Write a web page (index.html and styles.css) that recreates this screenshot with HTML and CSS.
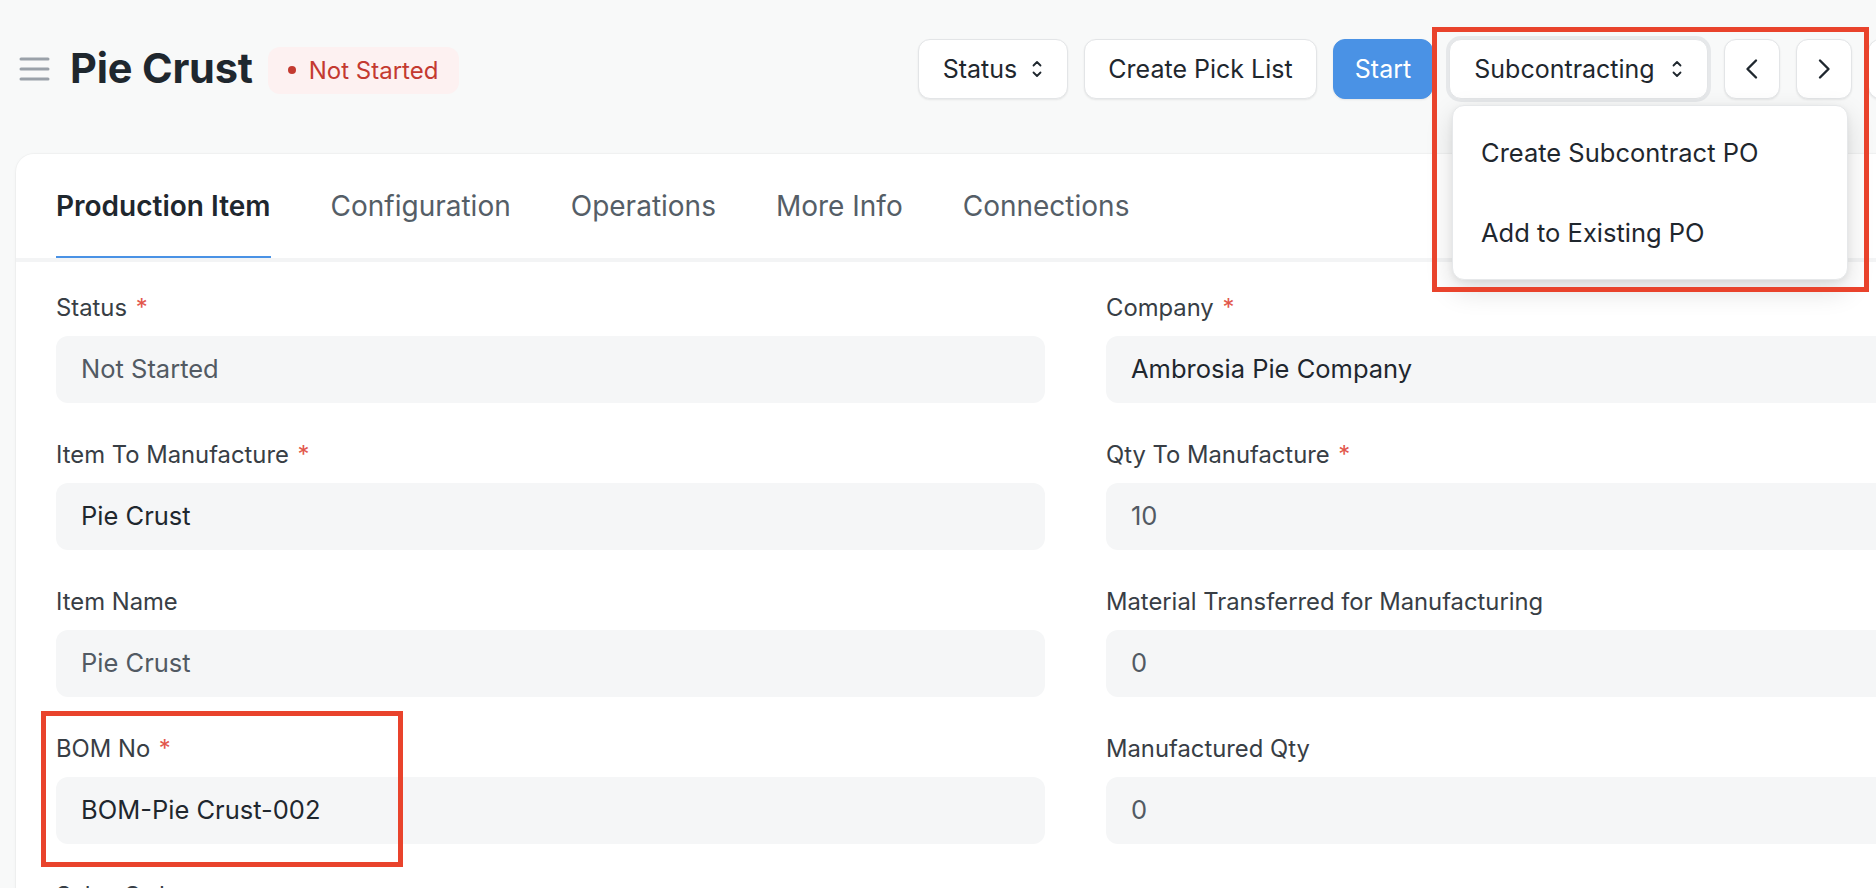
FILE: index.html
```html
<!DOCTYPE html>
<html lang="en">
<head>
<meta charset="utf-8">
<title>Pie Crust - Work Order</title>
<link rel="stylesheet" href="styles.css">
</head>
<body>
<div class="page">
  <header class="page-head">
    <div class="title-group">
      <button class="sidebar-toggle" aria-label="Toggle sidebar">
        <svg width="31" height="24" viewBox="0 0 31 24"><g stroke="#9aa1a9" stroke-width="3" stroke-linecap="round"><line x1="2" y1="2" x2="29" y2="2"/><line x1="2" y1="12" x2="29" y2="12"/><line x1="2" y1="22" x2="29" y2="22"/></g></svg>
      </button>
      <h1 class="title">Pie Crust</h1>
      <span class="badge"><span class="dot"></span>Not Started</span>
    </div>
    <div class="actions">
      <button class="btn btn-status">Status
        <svg class="updown" width="12" height="20" viewBox="0 0 12 20"><g fill="none" stroke="#1f272e" stroke-width="1.8" stroke-linecap="round" stroke-linejoin="round"><path d="M2.5 6.5 L6 3 L9.5 6.5"/><path d="M2.5 13.5 L6 17 L9.5 13.5"/></g></svg>
      </button>
      <button class="btn btn-pick">Create Pick List</button>
      <button class="btn btn-primary">Start</button>
      <div class="dropdown">
        <button class="btn btn-sub focused">Subcontracting
          <svg class="updown" width="12" height="20" viewBox="0 0 12 20"><g fill="none" stroke="#1f272e" stroke-width="1.8" stroke-linecap="round" stroke-linejoin="round"><path d="M2.5 6.5 L6 3 L9.5 6.5"/><path d="M2.5 13.5 L6 17 L9.5 13.5"/></g></svg>
        </button>
        <ul class="menu">
          <li class="menu-item">Create Subcontract PO</li>
          <li class="menu-item">Add to Existing PO</li>
        </ul>
      </div>
      <button class="btn btn-icon" aria-label="Previous">
        <svg width="16" height="22" viewBox="0 0 16 22"><path d="M12 2.5 L3.5 11 L12 19.5" fill="none" stroke="#1f272e" stroke-width="2.4" stroke-linecap="round" stroke-linejoin="round"/></svg>
      </button>
      <button class="btn btn-icon" aria-label="Next">
        <svg width="16" height="22" viewBox="0 0 16 22"><path d="M4 2.5 L12.5 11 L4 19.5" fill="none" stroke="#1f272e" stroke-width="2.4" stroke-linecap="round" stroke-linejoin="round"/></svg>
      </button>
      <button class="btn btn-icon" aria-label="More">
        <svg width="20" height="6" viewBox="0 0 20 6"><g fill="#1f272e"><circle cx="3" cy="3" r="2.2"/><circle cx="10" cy="3" r="2.2"/><circle cx="17" cy="3" r="2.2"/></g></svg>
      </button>
      <button class="btn btn-primary btn-save">Save</button>
    </div>
  </header>

  <main class="card">
    <nav class="tabs">
      <a class="tab active">Production Item</a>
      <a class="tab">Configuration</a>
      <a class="tab">Operations</a>
      <a class="tab">More Info</a>
      <a class="tab">Connections</a>
    </nav>
    <section class="form">
      <div class="col">
        <div class="field">
          <label class="label">Status <span class="req">*</span></label>
          <div class="control ro">Not Started</div>
        </div>
        <div class="field">
          <label class="label">Item To Manufacture <span class="req">*</span></label>
          <div class="control">Pie Crust</div>
        </div>
        <div class="field">
          <label class="label">Item Name</label>
          <div class="control ro">Pie Crust</div>
        </div>
        <div class="field">
          <label class="label">BOM No <span class="req">*</span></label>
          <div class="control">BOM-Pie Crust-002</div>
        </div>
        <div class="field">
          <label class="label">Sales Order</label>
          <div class="control"></div>
        </div>
      </div>
      <div class="col">
        <div class="field">
          <label class="label">Company <span class="req">*</span></label>
          <div class="control">Ambrosia Pie Company</div>
        </div>
        <div class="field">
          <label class="label">Qty To Manufacture <span class="req">*</span></label>
          <div class="control ro">10</div>
        </div>
        <div class="field">
          <label class="label">Material Transferred for Manufacturing</label>
          <div class="control ro">0</div>
        </div>
        <div class="field">
          <label class="label">Manufactured Qty</label>
          <div class="control ro">0</div>
        </div>
      </div>
    </section>
  </main>

  <div class="annot annot-menu"></div>
  <div class="annot annot-bom"></div>
</div>
</body>
</html>
```

FILE: styles.css
```css
* { box-sizing: border-box; }

html, body {
  margin: 0;
  padding: 0;
  overflow: hidden;
  background: #f8f9f9;
}

body {
  font-family: "Inter", "Noto Sans", sans-serif;
  color: #1f272e;
  -webkit-font-smoothing: antialiased;
}

.page {
  position: relative;
  width: 2151px;
  padding: 39px 16px 0;
}

/* ---------- header ---------- */
.page-head {
  display: flex;
  align-items: center;
  height: 60px;
  padding-right: 95px;
}

.title-group {
  display: flex;
  align-items: center;
}

.sidebar-toggle {
  display: flex;
  align-items: center;
  padding: 0;
  margin: 0 0 0 3px;
  border: 0;
  background: transparent;
}

.title {
  margin: 0 0 0 20px;
  font-size: 41.5px;
  font-weight: 700;
  line-height: 1;
  letter-spacing: -0.2px;
  color: #1f272e;
}

.badge {
  display: inline-flex;
  align-items: center;
  height: 47px;
  margin-left: 15px;
  margin-top: 2px;
  padding: 0 21px 0 20px;
  border-radius: 12px;
  background: #fdf1f1;
  color: #c43a30;
  font-size: 24px;
}

.badge .dot {
  width: 8px;
  height: 8px;
  border-radius: 50%;
  background: #c43a30;
  margin-right: 13px;
}

.actions {
  display: flex;
  align-items: center;
  gap: 16px;
  margin-left: auto;
}

.btn {
  display: inline-flex;
  align-items: center;
  justify-content: center;
  height: 60px;
  padding: 0 20px;
  border: 1px solid #e3e5e7;
  border-radius: 12px;
  background: #fff;
  box-shadow: 0 1px 2px rgba(0, 0, 0, 0.08);
  font-family: inherit;
  font-size: 25px;
  color: #1f272e;
  white-space: nowrap;
}

.btn-status { width: 150px; gap: 14px; }
.btn-pick { width: 233px; }
.btn-primary {
  width: 100px;
  background: #4a92e5;
  border-color: #4a92e5;
  color: #fff;
}
.btn-sub { width: 259px; gap: 16px; }
.btn-icon { width: 56px; padding: 0; }
.btn-save { width: 100px; }

.focused {
  box-shadow: 0 0 0 3px #e6e8ea, 0 1px 2px rgba(0, 0, 0, 0.08);
}

/* dropdown */
.dropdown {
  position: relative;
}

.menu {
  position: absolute;
  left: 3px;
  top: 66px;
  width: 396px;
  margin: 0;
  padding: 6px 0 7px;
  list-style: none;
  background: #fff;
  border: 1px solid #e6e8ea;
  border-radius: 12px;
  box-shadow: 0 10px 28px rgba(0, 0, 0, 0.14), 0 2px 6px rgba(0, 0, 0, 0.06);
  z-index: 5;
}

.menu-item {
  display: flex;
  align-items: center;
  height: 80px;
  padding-left: 28px;
  font-size: 25.5px;
  color: #1f272e;
}

/* ---------- card ---------- */
.card {
  margin-top: 55px;
  background: #fff;
  border-radius: 18px;
  box-shadow: 0 0 0 1px rgba(0, 0, 0, 0.025), 0 1px 4px rgba(0, 0, 0, 0.04);
  min-height: 800px;
}

.tabs {
  display: flex;
  gap: 60px;
  padding: 0 40px;
  border-bottom: 4px solid #f3f4f5;
}

.tab {
  display: flex;
  align-items: center;
  height: 104px;
  padding-top: 2px;
  border-bottom: 2px solid transparent;
  font-size: 28px;
  color: #555e67;
  white-space: nowrap;
}

.tab.active {
  font-weight: 600;
  color: #1f272e;
  border-bottom-color: #4a92e5;
}

/* ---------- form ---------- */
.form {
  display: grid;
  grid-template-columns: 989px 989px;
  column-gap: 61px;
  padding: 31px 40px 0;
}

.field {
  margin-bottom: 37px;
}

.label {
  display: block;
  height: 30px;
  margin-bottom: 13px;
  font-size: 23.8px;
  line-height: 30px;
  color: #383e45;
}

.req {
  color: #e2574c;
  margin-left: 2px;
}

.control {
  display: flex;
  align-items: center;
  height: 67px;
  padding: 0 25px 3px;
  border-radius: 12px;
  background: #f5f6f7;
  font-size: 25.5px;
  color: #1f272e;
}

.control.ro {
  color: #525a63;
}

/* ---------- annotations ---------- */
.annot {
  position: absolute;
  border: 5px solid #e9432c;
  pointer-events: none;
  z-index: 10;
}

.annot-menu {
  left: 1432px;
  top: 27px;
  width: 437px;
  height: 265px;
}

.annot-bom {
  left: 41px;
  top: 711px;
  width: 362px;
  height: 156px;
}
```
